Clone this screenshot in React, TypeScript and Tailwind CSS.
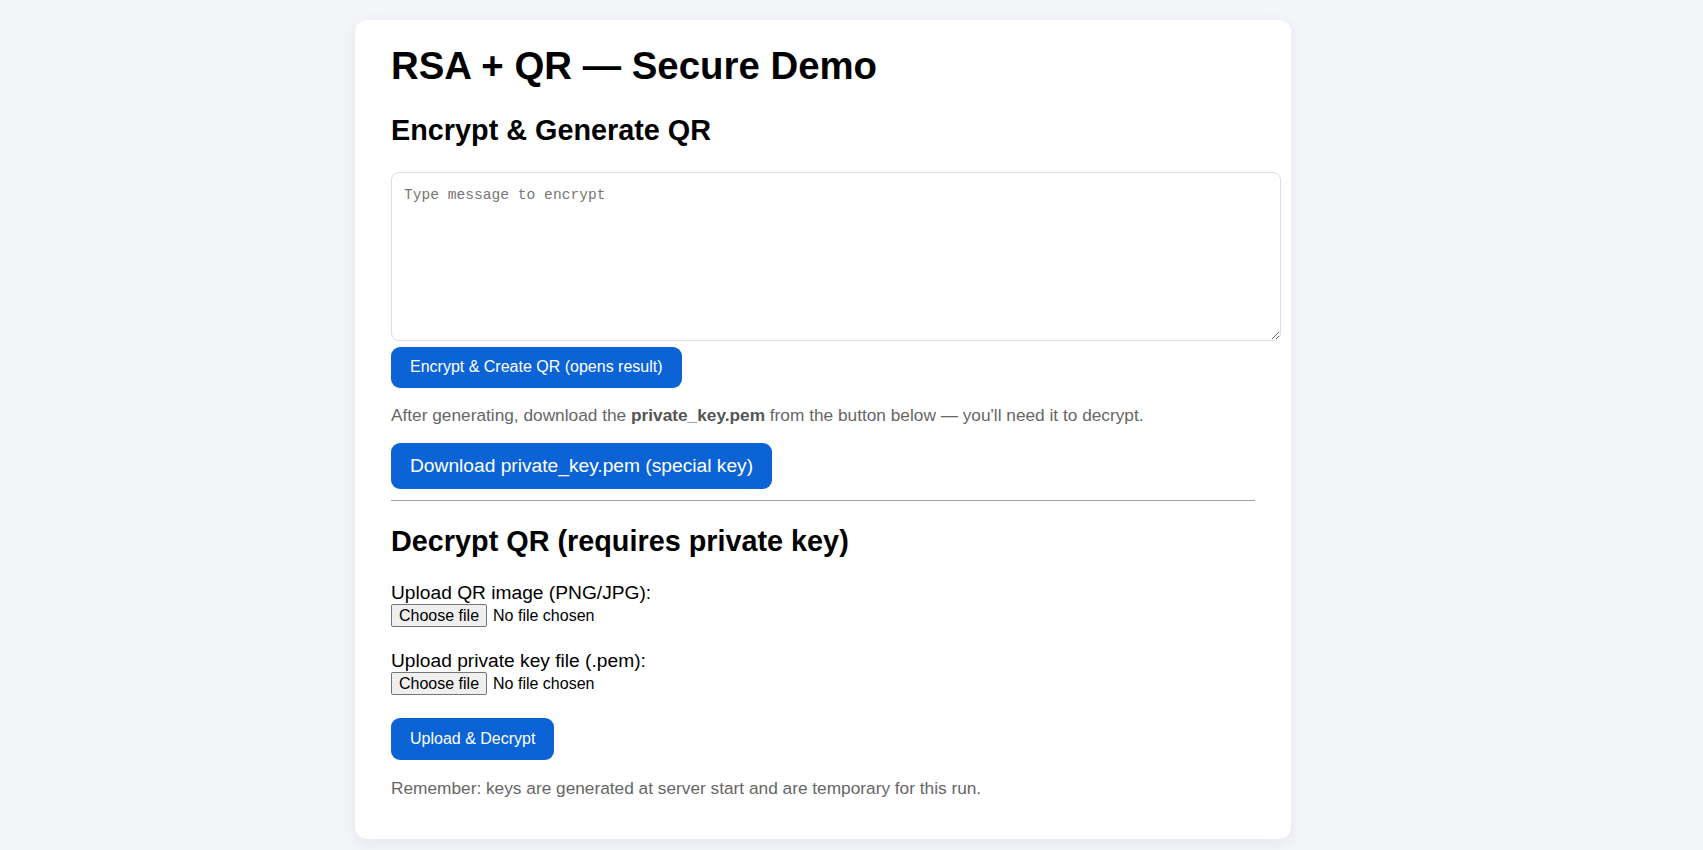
import { useState } from 'react';

const btn =
  'self-start rounded-[9px] bg-[#0b63d6] px-[19px] text-white leading-[normal] hover:bg-[#0a57bd]';

const FileField = ({ label, accept }: { label: string; accept: string }) => {
  const [name, setName] = useState('');
  return (
    <>
      <div className="text-[19.2px] leading-[22px] text-black">{label}</div>
      <label className="flex h-[23px] items-center self-start text-[16px] text-black">
        <input
          type="file"
          accept={accept}
          className="hidden"
          onChange={(e) => setName(e.target.files?.[0]?.name ?? '')}
        />
        <span className="flex h-[23px] items-center rounded-[2px] border border-[#767676] bg-[#efefef] px-[7px] leading-none">
          Choose file
        </span>
        <span className="ml-[6px]">{name || 'No file chosen'}</span>
      </label>
    </>
  );
};

export default function App() {
  const [msg, setMsg] = useState('');

  return (
    <div className="min-h-[850px] bg-[#f4f5f9] pt-[20px] font-['Liberation_Sans',Arial,sans-serif]">
      <div className="ml-[355px] flex w-[936px] flex-col rounded-[12px] bg-white px-[36px] pt-[24px] pb-[41px] shadow-[0_4px_16px_rgba(20,30,60,0.07)]">
        <h1 className="text-[38.4px] font-bold leading-[44px] text-black">RSA + QR — Secure Demo</h1>

        <h2 className="mt-[25.5px] text-[28.8px] font-bold leading-[33px] text-black">Encrypt &amp; Generate QR</h2>

        <textarea
          value={msg}
          onChange={(e) => setMsg(e.target.value)}
          placeholder="Type message to encrypt"
          className="mt-[25px] box-border h-[169px] w-[890px] rounded-[8px] border border-[#dddddd] px-[12px] pt-[13px] pb-[12px] font-['Liberation_Mono',monospace] text-[14.6px] leading-[19px] text-black outline-none placeholder:text-[#767676]"
        />

        <button className={`${btn} mt-[6px] h-[41px] text-[16px]`}>Encrypt &amp; Create QR (opens result)</button>

        <p className="mt-[17.5px] text-[17.28px] leading-[20px] text-[#666666]">
          After generating, download the <b className="font-bold text-[#555555]">private_key.pem</b> from the button below — you'll need it to decrypt.
        </p>

        <button className={`${btn} mt-[17.5px] h-[46px] text-[19.2px]`}>Download private_key.pem (special key)</button>

        <hr className="mt-[11px] border-0 border-t border-[#a3a3a3]" />

        <h2 className="mt-[24px] text-[28.8px] font-bold leading-[33px] text-black">Decrypt QR (requires private key)</h2>

        <div className="mt-[24.5px] flex flex-col">
          <FileField label="Upload QR image (PNG/JPG):" accept="image/png,image/jpeg" />
          <div className="h-[23px]" />
          <FileField label="Upload private key file (.pem):" accept=".pem" />
        </div>

        <button className={`${btn} mt-[23px] h-[42px] text-[16px]`}>Upload &amp; Decrypt</button>

        <p className="mt-[18px] text-[17.28px] leading-[20px] text-[#666666]">
          Remember: keys are generated at server start and are temporary for this run.
        </p>
      </div>
    </div>
  );
}
